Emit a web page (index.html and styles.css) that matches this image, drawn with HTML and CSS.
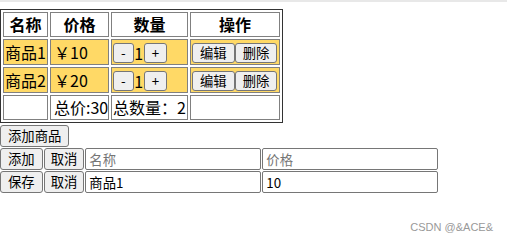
FILE: index.html
```html
<!DOCTYPE html>
<html lang="zh-CN">
<head>
    <meta charset="UTF-8">
    <meta name="viewport" content="width=device-width, initial-scale=1.0">
    <title>购物车</title>
    <link rel="stylesheet" href="styles.css">
</head>
<body>
    <div class="topbar"></div>
    <div id="app">
        <table class="cart">
            <thead>
                <tr>
                    <th class="col-name">名称</th>
                    <th class="col-price">价格</th>
                    <th class="col-count">数量</th>
                    <th class="col-ops">操作</th>
                </tr>
            </thead>
            <tbody>
                <tr class="item">
                    <td>商品1</td>
                    <td>￥10</td>
                    <td><button class="btn btn-sm">-</button><span class="num">1</span><button class="btn btn-sm">+</button></td>
                    <td class="ops"><button class="btn btn-sm">编辑</button><button class="btn btn-sm">删除</button></td>
                </tr>
                <tr class="item">
                    <td>商品2</td>
                    <td>￥20</td>
                    <td><button class="btn btn-sm">-</button><span class="num">1</span><button class="btn btn-sm">+</button></td>
                    <td class="ops"><button class="btn btn-sm">编辑</button><button class="btn btn-sm">删除</button></td>
                </tr>
                <tr class="total">
                    <td></td>
                    <td>总价:30</td>
                    <td>总数量：2</td>
                    <td></td>
                </tr>
            </tbody>
        </table>

        <div class="toolbar">
            <button class="btn">添加商品</button>
        </div>

        <div class="form-row">
            <button class="btn">添加</button>
            <button class="btn btn-narrow">取消</button>
            <input type="text" class="field" placeholder="名称">
            <input type="text" class="field" placeholder="价格">
        </div>
        <div class="form-row">
            <button class="btn">保存</button>
            <button class="btn btn-narrow">取消</button>
            <input type="text" class="field" value="商品1">
            <input type="text" class="field" value="10">
        </div>
    </div>

    <div class="watermark">CSDN @&amp;ACE&amp;</div>
</body>
</html>
```

FILE: styles.css
```css
body {
    margin: 0;
    font-family: "Noto Sans CJK SC", "Microsoft YaHei", sans-serif;
    color: #000;
    background: #fff;
}
.topbar {
    height: 2px;
    background: #e8e8e8;
}
#app {
    padding-top: 7px;
}
.cart {
    table-layout: fixed;
    width: 283px;
    margin: 0 0 2px 0;
    border: 1px solid #333;
    border-spacing: 2px;
    font-size: 16px;
    line-height: 21px;
}
.cart th,
.cart td {
    box-sizing: border-box;
    border: 1px solid #808080;
    padding: 0 1px;
    white-space: nowrap;
    overflow: hidden;
}
.cart th {
    height: 25px;
}
.cart td {
    height: 26px;
}
.cart .total td {
    height: 25px;
    background: #fff;
}
.col-name { width: 45px; }
.col-price { width: 59px; }
.col-count { width: 77px; }
.col-ops { width: 90px; }
.item td {
    background: #ffd966;
}
.cart td:nth-child(2) {
    padding-left: 3px;
}
.ops {
    padding-left: 2px;
}
.num {
    display: inline-block;
    width: 10px;
    text-align: center;
    vertical-align: middle;
}
.btn {
    height: 22px;
    padding: 0 7px;
    border: 1px solid #767676;
    border-radius: 3px;
    background: #efefef;
    color: #000;
    font-family: "Noto Sans CJK SC", "Microsoft YaHei", sans-serif;
    font-size: 13.33px;
    line-height: 20px;
    vertical-align: middle;
}
.btn-sm {
    height: 20px;
    line-height: 18px;
}
.btn-narrow {
    padding: 0 6px;
}
.toolbar {
    display: flex;
}
.form-row {
    display: flex;
    align-items: center;
    gap: 1px;
    margin-top: 1px;
}
.field {
    box-sizing: border-box;
    width: 176px;
    height: 22px;
    padding: 1px 3px;
    border: 1px solid #767676;
    border-radius: 2px;
    font-family: "Noto Sans CJK SC", "Microsoft YaHei", sans-serif;
    font-size: 13.33px;
    color: #000;
}
.field::placeholder {
    color: #757575;
}
.watermark {
    position: absolute;
    right: 14px;
    bottom: 9px;
    font-family: "Liberation Sans", Arial, sans-serif;
    font-size: 11px;
    color: #999;
}
```
